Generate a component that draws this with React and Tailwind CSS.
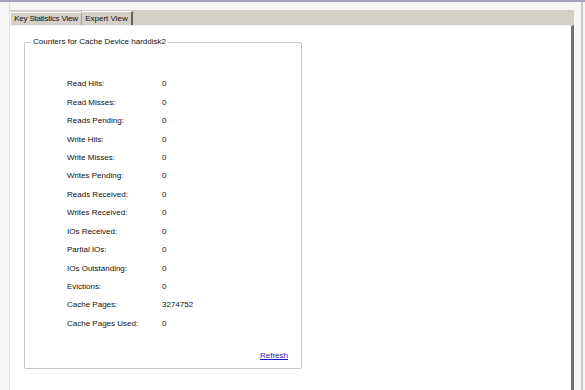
export default function App() {
  const rows = [
    ["Read Hits:", "0"],
    ["Read Misses:", "0"],
    ["Reads Pending:", "0"],
    ["Write Hits:", "0"],
    ["Write Misses:", "0"],
    ["Writes Pending:", "0"],
    ["Reads Received:", "0"],
    ["Writes Received:", "0"],
    ["IOs Received:", "0"],
    ["Partial IOs:", "0"],
    ["IOs Outstanding:", "0"],
    ["Evictions:", "0"],
    ["Cache Pages:", "3274752"],
    ["Cache Pages Used:", "0"],
  ];
  return (
    <div
      className="w-[585px] h-[390px] overflow-hidden bg-[#f6f6f6] border-t-2 border-[#a3a6bd] text-[#111]"
      style={{ fontFamily: '"Liberation Sans", Arial, sans-serif' }}
    >
      <div className="flex h-full">
        <div className="w-[10px] border-r border-[#e2e2e2]" />
        <div className="w-[564px] flex flex-col pt-[8px]">
          <div className="h-[15px] bg-[#d4d0c8] flex items-end text-[8px]">
            <div className="h-[13px] w-[72px] flex items-center justify-center border-t border-l border-white border-r border-r-[#a0a0a0] bg-[#d4d0c8] tracking-[-0.2px]">
              Key Statistics View
            </div>
            <div className="h-[14px] w-[51px] flex items-center justify-center border-t border-white border-r-2 border-r-[#606060] bg-[#d4d0c8]">
              Expert View
            </div>
          </div>
          <div className="flex-1 bg-white border-t border-[#eeeeee] border-r-[3px] border-r-[#707070] pl-[14px] pt-[11px]">
            <fieldset className="w-[278px] h-[332px] border border-[#c8c8c8] rounded-[2px] px-0 pt-0 text-[8px]">
              <legend className="ml-[6px] px-[2px] leading-[10px]">Counters for Cache Device harddisk2</legend>
              <div className="flex flex-col pl-[42px] pt-[28px]">
                {rows.map(([k, v]) => (
                  <div key={k} className="flex h-[18.45px] items-center">
                    <div className="w-[95px]">{k}</div>
                    <div>{v}</div>
                  </div>
                ))}
              </div>
              <div className="flex justify-end pr-[13px] mt-[17px]">
                <span className="text-[#1a1ad0] underline">Refresh</span>
              </div>
            </fieldset>
          </div>
        </div>
        <div className="w-[7px]" />
        <div className="w-[2px] bg-[#c8c8c8]" />
      </div>
    </div>
  );
}
